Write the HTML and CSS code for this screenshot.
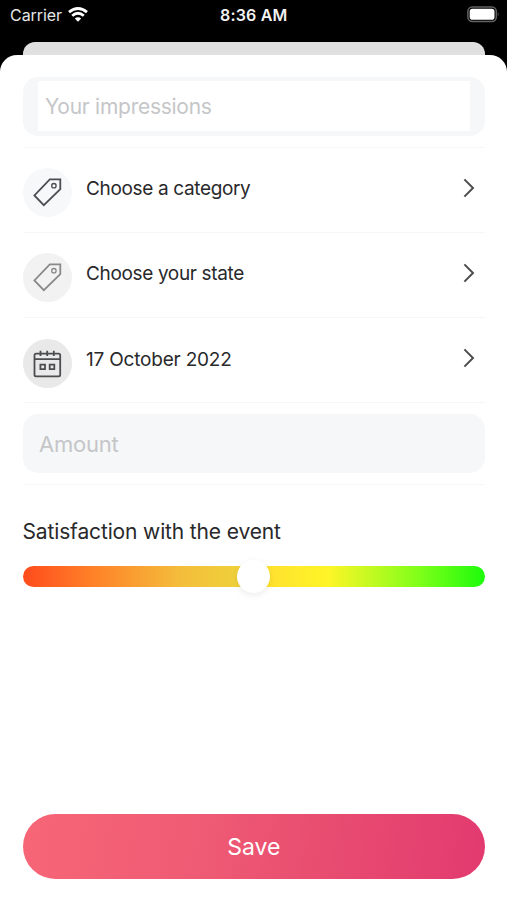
FILE: index.html
```html
<!DOCTYPE html>
<html lang="en">
<head>
<meta charset="utf-8">
<meta name="viewport" content="width=device-width, initial-scale=1">
<title>New event</title>
<link rel="stylesheet" href="styles.css">
</head>
<body>
<header class="status">
  <div class="carrier"><span>Carrier</span>
    <svg class="wifi" width="20" height="15" viewBox="0 0 20 15" fill="none" stroke="#fff" stroke-width="2.8"><path d="M1 5.2Q10-2.2 19 5.2"/><path d="M4.2 8.8Q10 3.8 15.8 8.8"/><path d="M10 14.8L6.8 11.6Q10 8.8 13.2 11.6Z" fill="#fff" stroke="none"/></svg>
  </div>
  <time class="clock">8:36 AM</time>
  <svg class="battery" width="33" height="17" viewBox="0 0 33 17"><rect x=".9" y=".9" width="28.4" height="14.6" rx="4.4" fill="none" stroke="#626262" stroke-width="1.5"/><rect x="2.7" y="2.7" width="24.8" height="11" rx="2.8" fill="#fff"/><path d="M30.8 6q1.8 2.2 0 4.4z" fill="#777"/></svg>
</header>
<div class="backdrop"></div>
<main class="sheet">
  <div class="field impressions"><input class="inner" type="text" placeholder="Your impressions" aria-label="Your impressions"></div>
  <div class="row">
    <span class="badge pale"><svg width="49" height="49" viewBox="0 0 49 49"><path d="M26.8 11.4H37.3V21.2L20.8 37.2L11.4 27.5Z"/><circle cx="30.9" cy="17.7" r="2.2"/></svg></span>
    <span class="label category">Choose a category</span>
    <svg class="chevron" width="12" height="20" viewBox="0 0 12 20"><path d="M1.4 1.4L10 10L1.4 18.6"/></svg>
  </div>
  <div class="row">
    <span class="badge soft"><svg width="49" height="49" viewBox="0 0 49 49"><path d="M26.8 11.4H37.3V21.2L20.8 37.2L11.4 27.5Z"/><circle cx="30.9" cy="17.7" r="2.2"/></svg></span>
    <span class="label state">Choose your state</span>
    <svg class="chevron" width="12" height="20" viewBox="0 0 12 20"><path d="M1.4 1.4L10 10L1.4 18.6"/></svg>
  </div>
  <div class="row">
    <span class="badge grey"><svg width="49" height="49" viewBox="0 0 49 49"><rect x="11.5" y="14.7" width="25.7" height="22.6" rx="1.6"/><path d="M11.5 20.1H37.2M17.5 11.7V17M24.2 11.7V17M30.8 11.7V17M17.4 25.6H22V30.2H17.4ZM26.7 25.6H31.3V30.2H26.7Z"/></svg></span>
    <span class="label date">17 October 2022</span>
    <svg class="chevron" width="12" height="20" viewBox="0 0 12 20"><path d="M1.4 1.4L10 10L1.4 18.6"/></svg>
  </div>
  <div class="amount-row"><input class="field amount" type="text" placeholder="Amount" aria-label="Amount"></div>
  <h2 class="title"><span>Satisfaction with the event</span></h2>
  <div class="slider"><span class="thumb"></span></div>
  <button class="save" type="button"><span>Save</span></button>
</main>
</body>
</html>
```
FILE: styles.css
```css
* { box-sizing: border-box; }
body {
  margin: 0;
  height: 900px;
  display: flex;
  flex-direction: column;
  overflow: hidden;
  background: #000;
  color: #29292b;
  font-family: Inter, "Liberation Sans", sans-serif;
}
.status {
  height: 41.5px;
  flex: none;
  display: grid;
  grid-template-columns: 1fr auto 1fr;
  align-items: start;
  padding: 5px 7.5px 0 10px;
  color: #fff;
  font-size: 16px;
  line-height: 20px;
}
.carrier { display: flex; gap: 6px; color: #e6e6e6; letter-spacing: -.05px; }
.wifi { margin-top: 2px; }
.clock { font-weight: 600; margin-right: 2px; color: #f2f2f2; letter-spacing: .2px; }
.battery { justify-self: end; margin-top: 1px; }
.backdrop {
  height: 13.5px;
  flex: none;
  margin: 0 22px 0 23px;
  border-radius: 12px 12px 0 0;
  background: #e0e0e0;
}
.sheet {
  flex: 1;
  display: flex;
  flex-direction: column;
  padding: 22.3px 22px 21.5px 22.5px;
  border-radius: 17px 17px 0 0;
  background: #fff;
}
.field {
  height: 59px;
  width: 100%;
  flex: none;
  border: 0;
  border-radius: 15px;
  background: #f5f7f9;
  font-family: inherit;
}
.impressions { padding: 4px 15.5px 5px; margin-bottom: 10.3px; }
.inner {
  display: block;
  width: 100%;
  height: 50px;
  padding: 1px 7px 0;
  border: 0;
  background: #fff;
  font: 21px/49px Inter, sans-serif;
  letter-spacing: -.27px;
}
input::placeholder { color: #c5c6c8; opacity: 1; }
.row {
  height: 85.3px;
  flex: none;
  display: flex;
  align-items: flex-start;
  padding: 20.5px 10.5px 0 0;
  border-top: 1.5px solid #f5f6f6;
}
.badge { width: 49px; height: 49px; border-radius: 50%; overflow: hidden; }
.badge svg {
  display: block;
  fill: none;
  stroke: #4c4d50;
  stroke-width: 1.8;
}
.badge circle { stroke-width: 1.3; }
.pale { background: #f6f8fa; }
.soft { background: #f2f2f2; }
.soft svg { stroke: #898989; }
.grey { background: #e9e9e9; }
.label { margin-left: 14.5px; flex: 1; font-size: 19px; line-height: 41px; letter-spacing: -.35px; }
.date { letter-spacing: -.2px; }
.chevron { margin-top: 9.5px; fill: none; stroke: #4d4d4f; stroke-width: 2; }
.amount-row {
  flex: none;
  height: 82.2px;
  padding-top: 10.7px;
  border-top: 1.5px solid #f5f6f6;
  border-bottom: 1.5px solid #f5f6f6;
}
.amount { padding: 1px 16.5px 0; font-size: 22px; letter-spacing: -.25px; }
.title { margin: 32px 0 0; font-size: 21px; font-weight: 400; line-height: 30px; letter-spacing: -.14px; }
.slider {
  display: flex;
  align-items: center;
  justify-content: center;
  height: 21.5px;
  flex: none;
  margin-top: 19px;
  border-radius: 11px;
  background: linear-gradient(90deg, #ff4b1c 0%, #ff8128 15%, #f4bd3b 34%, #efd03a 46%, #ffe12f 53%, #fff527 66%, #7dff19 86%, #1dfb0c 100%);
}
.thumb { width: 33px; height: 33px; border-radius: 50%; background: #fff; box-shadow: 0 2px 7px rgba(0,0,0,.08); flex: none; }
.save {
  width: 100%;
  height: 64.5px;
  margin-top: auto;
  border: 0;
  border-radius: 33px;
  background: linear-gradient(97deg, #f76677 0%, #ef5b74 38%, #e84c70 66%, #e23a70 100%);
  color: #fff;
  font: 23px/64.5px Inter, sans-serif;
  padding: 1px 0 0;
}
```
